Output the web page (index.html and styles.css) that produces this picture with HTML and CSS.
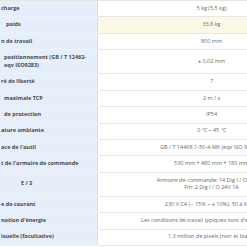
FILE: index.html
```html
<!DOCTYPE html>
<html lang="fr">
<head>
<meta charset="utf-8">
<link rel="stylesheet" href="styles.css">
</head>
<body>
<table class="specs">
  <tbody>
    <tr><th>charge</th><td>5 kg (5,5 kg)</td></tr>
    <tr class="hl"><th class="in-l">poids</th><td>33,8 kg</td></tr>
    <tr><th>n de travail</th><td>800 mm</td></tr>
    <tr><th class="in-s">positionnement (GB / T 12462-<br>eqv ISO9283)</th><td>± 0,02 mm</td></tr>
    <tr><th>ré de liberté</th><td>7</td></tr>
    <tr><th class="in-s">maximale TCP</th><td>2 m / s</td></tr>
    <tr><th class="in-s">de protection</th><td>IP54</td></tr>
    <tr><th>ature ambiante</th><td>0 ℃ ~ 45 ℃</td></tr>
    <tr><th>ace de l'outil</th><td>GB / T 14468.1-50-4-M6 (eqv ISO 9409-1)</td></tr>
    <tr><th>t de l'armoire de commande</th><td>530 mm * 480 mm * 180 mm</td></tr>
    <tr><th class="in-x">E / S</th><td>Armoire de commande: 14 Dig I / O 24V 1A<br>Fin: 2 Dig I / O 24V 1A</td></tr>
    <tr><th>e de courant</th><td>230 V CA (− 15% ~ ± 10%), 50 à 60 Hz</td></tr>
    <tr><th>nation d'énergie</th><td>Les conditions de travail typiques sont d'environ 350 W</td></tr>
    <tr><th>isuelle (facultative)</th><td>1,3 million de pixels (noir et blanc)</td></tr>
  </tbody>
</table>
</body>
</html>
```
FILE: styles.css
```css
html, body {
  margin: 0;
  padding: 0;
  background: #ffffff;
  overflow: hidden;
}

.specs {
  width: 325px;
  border-collapse: collapse;
  table-layout: fixed;
  border-top: 1px solid #e6e6e6;
  font-family: "Open Sans", "Liberation Sans", sans-serif;
  font-size: 5.5px;
  line-height: 7.8px;
}

.specs th,
.specs td {
  padding: 3.8px 0;
  border-bottom: 1px solid #e6e6e6;
  white-space: nowrap;
  overflow: hidden;
  vertical-align: middle;
}

.specs th {
  width: 96px;
  text-align: left;
  font-weight: 700;
  color: #474b52;
  background: #e6eefa;
  border-right: 1px solid #d7dfea;
  border-bottom-color: #eef3fb;
  padding-left: 1px;
}

.specs th.in-s { padding-left: 4px; }
.specs th.in-l { padding-left: 6px; }
.specs th.in-x { padding-left: 21px; }

.specs td {
  text-align: center;
  color: #6a6a6a;
  font-weight: 400;
}

.specs tr.hl td {
  background: #fcf8e8;
}
```
